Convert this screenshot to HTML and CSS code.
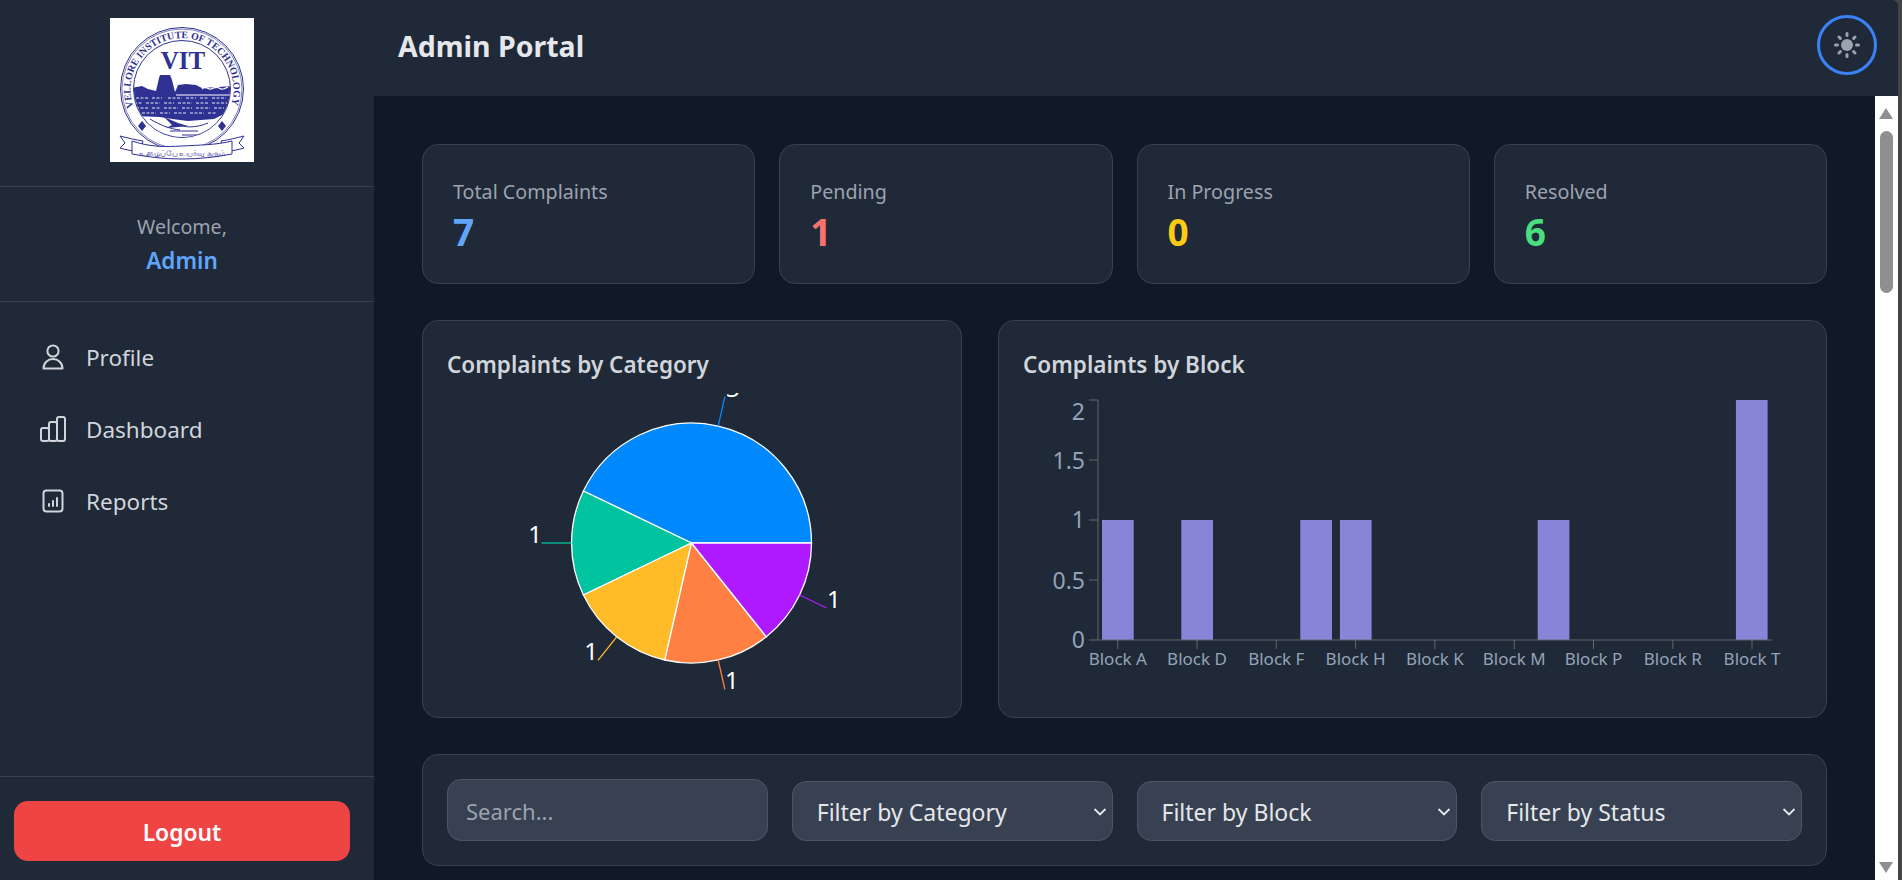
FILE: index.html
```html
<!DOCTYPE html>
<html lang="en">
<head>
<meta charset="utf-8">
<title>Admin Portal</title>
<link rel="stylesheet" href="styles.css">
</head>
<body>
<div class="app">
  <aside class="sidebar">
    <div class="logo-wrap">
      <svg class="logo" viewBox="0 0 144 144">
        <defs>
          <clipPath id="inner"><circle cx="72" cy="71" r="48"/></clipPath>
          <path id="ring" d="M23.500 89 A51.500 51.500 0 1 1 120.500 89"/>
        </defs>
        <rect width="144" height="144" fill="#fff"/>
        <circle cx="72" cy="71" r="61.500" class="ln"/>
        <circle cx="72" cy="71" r="60" class="ln thin"/>
        <circle cx="72" cy="71" r="48.500" class="ln"/>
        <text class="ring-text"><textPath href="#ring" textLength="194" lengthAdjust="spacingAndGlyphs">VELLORE INSTITUTE OF TECHNOLOGY</textPath></text>
        <text x="73" y="51" text-anchor="middle" class="vit">VIT</text>
        <g clip-path="url(#inner)">
          <path class="navy" d="M22 70 L32 68 L38 71 L46 73 L49 60 L50 57 L60 57 L62 62 L65 74 L66 72 L68 67 L76 66 L86 67 L92 70 L122 68 L122 120 L22 120Z"/>
          <path class="wave" d="M92 71c4-4 6 1 9 0s5-3 8-1 5 1 9-1"/>
          <path class="wave" d="M66 77H120" />
          <g class="bricks">
            <path d="M26 80h12M42 80h10M58 80h14M76 80h10M90 80h8M102 80h14"/>
            <path d="M24 85h8M36 85h14M54 85h10M68 85h14M86 85h12M102 85h15"/>
            <path d="M26 90h12M42 90h8M54 90h14M72 90h10M86 90h14M104 90h10"/>
            <path d="M32 95h14M50 95h10M64 95h12M80 95h14M98 95h8"/>
          </g>
          <path class="white" d="M22 98 L50 99 L62 101 L78 103 L104 101 L122 92 L122 124 L22 124Z"/>
          <path class="ln" d="M40 101c10 6 20 10 30 11M68 106c6 4 18 4 30-1M60 113h28M72 117h18"/>
          <path class="navy" d="M54 99l14 6 10 3-10 1-12 1 6-3z"/>
        </g>
        <path class="navy" d="M32 103l4 5-4 5-4-5zM112 103l4 5-4 5-4-5z"/>
        <path class="ln white" d="M10 118c8 2 16 4 23 5l-3 11c-6-1-14-2-20-4l5-5zM134 118c-8 2-16 4-23 5l3 11c6-1 14-2 20-4l-5-5z"/>
        <path class="band" d="M22 123c18 6 32 6 50 5s34-1 50-5v13c-16 3-32 5-50 5s-34-2-50-5z"/>
        <text x="72" y="138" text-anchor="middle" class="motto">உழைப்பே உயர்வு தரும்</text>
      </svg>
    </div>
    <div class="welcome">
      <div class="welcome-label">Welcome,</div>
      <div class="welcome-name">Admin</div>
    </div>
    <nav class="nav">
      <a class="nav-item">
        <span class="nav-icon"><svg viewBox="0 0 26 26" class="ic"><circle cx="13" cy="7" r="5.600"/><path d="M3.500 24.500c0-5.500 4.200-9.500 9.500-9.500s9.500 4 9.500 9.500z"/></svg></span>
        <span>Profile</span>
      </a>
      <a class="nav-item">
        <span class="nav-icon"><svg viewBox="0 0 26 26" class="ic"><rect x="1" y="12" width="8" height="13" rx="2"/><rect x="9" y="6" width="8" height="19" rx="2"/><rect x="17" y="1" width="8" height="24" rx="2"/></svg></span>
        <span>Dashboard</span>
      </a>
      <a class="nav-item">
        <span class="nav-icon"><svg viewBox="0 0 26 26" class="ic"><path d="M6.500 2.500h13a3 3 0 0 1 3 3v15c0 1.500-1 3-3 3h-13a3 3 0 0 1-3-3v-15a3 3 0 0 1 3-3z"/><path d="M9 18v-2M13 18v-5M17 18v-8"/></svg></span>
        <span>Reports</span>
      </a>
    </nav>
    <div class="logout-wrap">
      <button class="logout">Logout</button>
    </div>
  </aside>

  <div class="right">
    <header class="topbar">
      <h1 class="title">Admin Portal</h1>
      <button class="theme" aria-label="Toggle theme">
        <svg viewBox="0 0 30 30" class="sun">
          <circle cx="15" cy="15" r="6"/>
          <path d="M15 3.500v2M15 24.500v2M3.500 15h2M24.500 15h2M7 7l1.400 1.400M21.600 21.600l1.400 1.400M7 23l1.400-1.400M21.600 8.400l1.400-1.400"/>
        </svg>
      </button>
    </header>
    <div class="below">
      <main class="main">
        <section class="stats">
          <div class="card stat"><div class="stat-label">Total Complaints</div><div class="stat-value blue">7</div></div>
          <div class="card stat"><div class="stat-label">Pending</div><div class="stat-value red">1</div></div>
          <div class="card stat"><div class="stat-label">In Progress</div><div class="stat-value yellow">0</div></div>
          <div class="card stat"><div class="stat-label">Resolved</div><div class="stat-value green">6</div></div>
        </section>
        <section class="charts">
          <div class="card chart">
            <h2 class="chart-title">Complaints by Category</h2>
            <svg class="plot" width="489" height="300" viewBox="0 0 489 300">
              <g class="slices">
                <path fill="#0088FE" d="M244.500 150 L364.500 150 A120 120 0 0 0 136.400 98 Z"/>
                <path fill="#00C49F" d="M244.500 150 L136.400 98 A120 120 0 0 0 136.400 202 Z"/>
                <path fill="#FFBB28" d="M244.500 150 L136.400 202 A120 120 0 0 0 217.800 267 Z"/>
                <path fill="#FF8042" d="M244.500 150 L217.800 267 A120 120 0 0 0 319.300 243.800 Z"/>
                <path fill="#AF19FF" d="M244.500 150 L319.300 243.800 A120 120 0 0 0 364.500 150 Z"/>
              </g>
              <g class="leaders">
                <path stroke="#0088FE" d="M271.200 33 L277.900 3.700"/>
                <path stroke="#00C49F" d="M124.500 150 L94.500 150"/>
                <path stroke="#FFBB28" d="M169.700 243.800 L151 267.300"/>
                <path stroke="#FF8042" d="M271.200 267 L277.900 296.300"/>
                <path stroke="#AF19FF" d="M352.600 202 L379.600 215"/>
              </g>
              <g class="pie-labels">
                <text x="279" y="3.700">3</text>
                <text x="95" y="150" text-anchor="end">1</text>
                <text x="151" y="267.300" text-anchor="end">1</text>
                <text x="278" y="296.300">1</text>
                <text x="380" y="215">1</text>
              </g>
            </svg>
          </div>
          <div class="card chart">
            <h2 class="chart-title">Complaints by Block</h2>
            <svg class="plot" width="779" height="300" viewBox="0 0 779 300">
              <g class="bars">
                <rect x="79" y="127" width="31.700" height="120"/>
                <rect x="158.300" y="127" width="31.700" height="120"/>
                <rect x="277.300" y="127" width="31.700" height="120"/>
                <rect x="316.900" y="127" width="31.700" height="120"/>
                <rect x="514.700" y="127" width="31.700" height="120"/>
                <rect x="712.900" y="7" width="31.700" height="240"/>
              </g>
              <path class="axis" d="M75 7V247M66 7H75M66 67H75M66 127H75M66 187H75M66 247H749M94.800 247v9M174 247v9M253.300 247v9M332.600 247v9M411.900 247v9M491.200 247v9M570.500 247v9M649.800 247v9M729 247v9"/>
              <g class="y-ticks">
                <text x="62" y="27">2</text>
                <text x="62" y="76">1.5</text>
                <text x="62" y="135">1</text>
                <text x="62" y="196">0.5</text>
                <text x="62" y="255">0</text>
              </g>
              <g class="x-ticks">
                <text x="94.800" y="272">Block A</text>
                <text x="174" y="272">Block D</text>
                <text x="253.300" y="272">Block F</text>
                <text x="332.600" y="272">Block H</text>
                <text x="411.900" y="272">Block K</text>
                <text x="491.200" y="272">Block M</text>
                <text x="570.500" y="272">Block P</text>
                <text x="649.800" y="272">Block R</text>
                <text x="729" y="272">Block T</text>
              </g>
            </svg>
          </div>
        </section>
        <section class="card filters">
          <input class="field search" type="text" placeholder="Search...">
          <span class="select-wrap">
            <select class="field select"><option>Filter by Category</option></select>
            <svg class="chev" viewBox="0 0 14 10"><path d="M1.500 2l5.500 5.500L12.500 2"/></svg>
          </span>
          <span class="select-wrap">
            <select class="field select"><option>Filter by Block</option></select>
            <svg class="chev" viewBox="0 0 14 10"><path d="M1.500 2l5.500 5.500L12.500 2"/></svg>
          </span>
          <span class="select-wrap">
            <select class="field select"><option>Filter by Status</option></select>
            <svg class="chev" viewBox="0 0 14 10"><path d="M1.500 2l5.500 5.500L12.500 2"/></svg>
          </span>
        </section>
      </main>
      <div class="scrollbar">
        <span class="arrow up"></span>
        <span class="thumb"></span>
        <span class="arrow down"></span>
      </div>
    </div>
  </div>
</div>
</body>
</html>
```
FILE: styles.css
```css
* { box-sizing: border-box; }
html, body { height: 100%; }
body {
  margin: 0;
  overflow: hidden;
  background: #444;
  color: #e5e7eb;
  font-family: "Noto Sans", "Open Sans", sans-serif;
}
.app { display: flex; width: 1902px; height: 880px; }

.sidebar {
  width: 374px;
  flex: none;
  display: flex;
  flex-direction: column;
  background: #1f2937;
}
.logo-wrap {
  padding: 18px 20px 24px 10px;
  display: flex;
  justify-content: center;
  border-bottom: 1px solid #374151;
}
.logo { width: 144px; height: 144px; display: block; }
.ln { fill: none; stroke: #2e3192; stroke-width: 1; }
.thin { stroke-width: .6; }
.navy { fill: #2e3192; stroke: none; }
.white { fill: #fff; stroke: none; }
.ln.white { fill: #fff; stroke: #2e3192; }
.wave { fill: none; stroke: #fff; stroke-width: 1.200; }
.bricks path { fill: none; stroke: #fff; stroke-width: .9; stroke-dasharray: 3 1.500; }
.band { fill: #fff; stroke: #2e3192; stroke-width: 1; }
.ring-text { font-family: "Liberation Serif", serif; font-weight: 700; font-size: 10px; fill: #2e3192; }
.vit { font-family: "Liberation Serif", serif; font-weight: 700; font-size: 25px; fill: #2e3192; }
.motto { font-family: "Noto Sans", sans-serif; font-size: 7.500px; fill: #2e3192; }

.welcome {
  height: 115px;
  padding: 24px 20px 0 10px;
  text-align: center;
  border-bottom: 1px solid #374151;
}
.welcome-label { font-size: 19.600px; line-height: 32px; color: #9ca3af; }
.welcome-name { font-size: 22.500px; line-height: 36px; font-weight: 600; color: #60a5fa; }

.nav { padding: 19px 0 0 40px; display: flex; flex-direction: column; }
.nav-item {
  height: 72px;
  display: flex;
  align-items: center;
  gap: 20px;
  font-size: 22.500px;
  color: #d1d5db;
}
.nav-icon { width: 26px; height: 26px; display: block; }
.ic { width: 26px; height: 26px; display: block; fill: none; stroke: #d1d5db; stroke-width: 2; stroke-linejoin: round; stroke-linecap: round; }

.logout-wrap {
  margin-top: auto;
  padding: 24px 24px 19px 14px;
  border-top: 1px solid #374151;
}
.logout {
  width: 100%;
  height: 60px;
  padding: 2px 0 0;
  border: 0;
  border-radius: 14px;
  background: #ef4444;
  color: #fff;
  font-family: inherit;
  font-size: 22.800px;
  font-weight: 600;
}

.right { width: 1524px; flex: none; display: flex; flex-direction: column; min-height: 0; }
.topbar {
  height: 96px;
  flex: none;
  display: flex;
  align-items: center;
  justify-content: space-between;
  padding: 0 21px 6px 24px;
  background: #1f2937;
  border-top-right-radius: 6px;
}
.title { margin: 2px 0 0; font-size: 28.500px; font-weight: 700; color: #e5e7eb; }
.theme {
  width: 60px;
  height: 60px;
  padding: 0;
  border: 3px solid #3b82f6;
  border-radius: 50%;
  background: transparent;
  display: flex;
  align-items: center;
  justify-content: center;
}
.sun { width: 30px; height: 30px; display: block; fill: #9ca3af; stroke: #9ca3af; }
.sun circle { stroke: none; }
.sun path { stroke-width: 3; stroke-linecap: round; fill: none; }

.below { flex: 1; min-height: 0; display: flex; }
.main {
  width: 1501px;
  flex: none;
  padding: 48px;
  background: #111827;
  overflow: hidden;
  display: flex;
  flex-direction: column;
  gap: 36px;
}
.card { background: #1f2937; border: 1px solid #374151; border-radius: 16px; }

.stats { display: grid; grid-template-columns: repeat(4, 1fr); gap: 24px; flex: none; }
.stat { height: 140px; padding: 31px 30px 30px; }
.stat-label { font-size: 19.700px; line-height: 32px; color: #9ca3af; }
.stat-value { margin-top: 2px; font-size: 37px; line-height: 44px; font-weight: 700; }
.blue { color: #60a5fa; }
.red { color: #f87171; }
.yellow { color: #facc15; }
.green { color: #4ade80; }

.charts { display: grid; grid-template-columns: 540fr 829fr; gap: 36px; flex: none; }
.chart { padding: 24px; }
.chart-title { margin: 0 0 8px; font-size: 22.500px; line-height: 40px; font-weight: 600; color: #d1d5db; }
.plot { display: block; }
.slices path { stroke: #fff; stroke-width: 1.300; }
.leaders path { fill: none; stroke-width: 1.300; }
.pie-labels text { fill: #fff; font-size: 24px; }
.axis { fill: none; stroke: #666; stroke-width: 1; }
.bars rect { fill: #8884d8; }
.y-ticks text { fill: #94a3b8; font-size: 23px; text-anchor: end; }
.x-ticks text { fill: #94a3b8; font-size: 17px; text-anchor: middle; }

.filters {
  flex: none;
  padding: 24px;
  display: grid;
  grid-template-columns: repeat(4, 1fr);
  gap: 24px;
  align-items: end;
}
.field {
  width: 100%;
  background: #374151;
  border: 1px solid #4b5563;
  border-radius: 14px;
  color: #e5e7eb;
  font-family: inherit;
}
.search { height: 62px; padding: 2px 18px 0; font-size: 22px; }
.search::placeholder { color: #9ca3af; opacity: 1; }
.select-wrap { display: block; position: relative; height: 60px; }
.select {
  display: block;
  height: 60px;
  padding: 2px 30px 0 24px;
  font-size: 23px;
  appearance: none;
}
.chev {
  position: absolute;
  right: 6px;
  top: 26px;
  width: 14px;
  height: 10px;
  fill: none;
  stroke: #e5e7eb;
  stroke-width: 1.800;
  pointer-events: none;
}

.scrollbar {
  width: 23px;
  flex: none;
  background: #fff;
  position: relative;
}
.thumb {
  position: absolute;
  left: 5px;
  top: 35px;
  width: 13px;
  height: 162px;
  border-radius: 7px;
  background: #8f8f8f;
}
.arrow {
  position: absolute;
  left: 4px;
  width: 0;
  height: 0;
  border-left: 7.500px solid transparent;
  border-right: 7.500px solid transparent;
}
.up { top: 12px; border-bottom: 11px solid #8f8f8f; }
.down { bottom: 7px; border-top: 11px solid #8f8f8f; }
```
